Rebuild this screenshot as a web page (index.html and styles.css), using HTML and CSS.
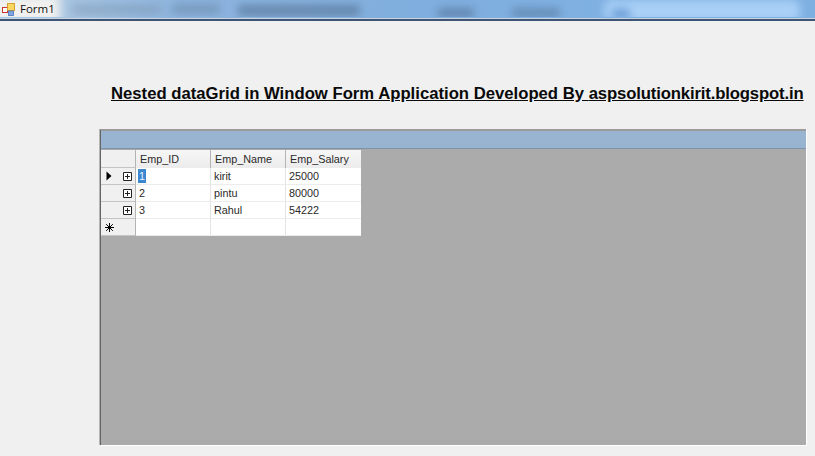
FILE: index.html
```html
<!DOCTYPE html>
<html lang="en">
<head>
<meta charset="utf-8">
<title>Form1</title>
<link rel="stylesheet" href="styles.css">
</head>
<body>
<header class="titlebar">
  <div class="glass"><i class="blob b1"></i><i class="blob b2"></i><i class="blob b3"></i><i class="blob b4"></i><i class="blob b5"></i><i class="blob b6"></i><i class="blob b7"></i><i class="blob b8"></i></div>
  <svg class="app-icon" width="16" height="16" viewBox="0 0 16 16">
    <rect x="1.5" y="7.5" width="5" height="5" fill="#fff" stroke="#c8362e"/>
    <rect x="6.5" y="3.5" width="7" height="7" fill="#f8d860" stroke="#d8a030"/>
    <rect x="7.5" y="11" width="5" height="4.5" fill="#7fa6e0" stroke="#4a70b8" stroke-width=".8"/>
  </svg>
  <span class="form-title">Form1</span>
</header>
<main class="form">
  <h1 class="heading">Nested dataGrid in Window Form Application Developed By <span class="domain">aspsolutionkirit.blogspot.in</span></h1>
  <section class="datagrid">
    <div class="caption"></div>
    <div class="grid-body">
      <table class="emp">
        <thead>
          <tr><th class="rh"></th><th>Emp_ID</th><th>Emp_Name</th><th>Emp_Salary</th></tr>
        </thead>
        <tbody>
          <tr>
            <td class="rh"><span class="rh-in"><svg class="arrow" width="6" height="10" viewBox="0 0 6 10"><path d="M0.5 0.5 L5.5 5 L0.5 9.5Z" fill="#000"/></svg><svg class="plus" width="9" height="9" viewBox="0 0 9 9"><path d="M.5.5h8v8h-8zM2 4.5h5M4.5 2v5" fill="#fff" stroke="#222"/></svg></span></td>
            <td><span class="sel">1</span></td><td>kirit</td><td>25000</td>
          </tr>
          <tr>
            <td class="rh"><span class="rh-in"><svg class="plus" width="9" height="9" viewBox="0 0 9 9"><path d="M.5.5h8v8h-8zM2 4.5h5M4.5 2v5" fill="#fff" stroke="#222"/></svg></span></td>
            <td>2</td><td>pintu</td><td>80000</td>
          </tr>
          <tr>
            <td class="rh"><span class="rh-in"><svg class="plus" width="9" height="9" viewBox="0 0 9 9"><path d="M.5.5h8v8h-8zM2 4.5h5M4.5 2v5" fill="#fff" stroke="#222"/></svg></span></td>
            <td>3</td><td>Rahul</td><td>54222</td>
          </tr>
          <tr>
            <td class="rh"><span class="rh-new"><svg width="9" height="9" viewBox="0 0 9 9"><path d="M4.5 0v9M0 4.5h9M1.2 1.2l6.6 6.6M7.8 1.2L1.2 7.8" stroke="#000" stroke-width="1"/></svg></span></td>
            <td></td><td></td><td></td>
          </tr>
        </tbody>
      </table>
    </div>
  </section>
</main>
</body>
</html>
```
FILE: styles.css
```css
* { box-sizing: border-box; }
html, body { margin: 0; padding: 0; }
body {
  width: 815px;
  height: 456px;
  overflow: hidden;
  background: #f0f0f0;
  font-family: "Liberation Sans", Arial, sans-serif;
  color: #000;
}
.titlebar {
  position: relative;
  height: 21px;
  display: flex;
  align-items: center;
  padding: 0 0 3px 1px;
  overflow: hidden;
  background: linear-gradient(90deg, #a9c6e2 60px, #8db4de 180px, #80aedd 400px, #7fb0e2 590px);
  border-bottom: 2px solid #3e5474;
  box-shadow: inset 0 -1px 0 #c8d4e2;
}
.glass { position: absolute; inset: 0 0 2px; overflow: hidden; }
.blob { position: absolute; display: block; filter: blur(4px); border-radius: 3px; }
.b1 { left: -10px; top: -6px; width: 70px; height: 30px; background: #f1f1ef; filter: blur(5px); }
.b2 { left: 72px; top: 5px; width: 90px; height: 9px; background: #7c95b0; opacity: .55; }
.b7 { left: 172px; top: 4px; width: 48px; height: 10px; background: #6b89a9; opacity: .6; }
.b3 { left: 238px; top: 5px; width: 122px; height: 11px; background: #5e7ea0; opacity: .8; }
.b4 { left: 438px; top: 8px; width: 36px; height: 10px; background: #5b7ea6; opacity: .8; }
.b5 { left: 512px; top: 8px; width: 48px; height: 10px; background: #5b7ea6; opacity: .7; }
.b6 { left: 604px; top: 0; width: 196px; height: 22px; background: #a9d0f6; filter: blur(4px); border-radius: 8px; }
.b8 { left: 612px; top: 9px; width: 18px; height: 10px; background: #5c90d0; opacity: .8; }
.app-icon { position: relative; flex: none; }
.form-title {
  position: relative;
  margin-left: 3px;
  font-family: "Open Sans", "Liberation Sans", sans-serif;
  font-size: 11.5px;
  color: #111;
}
.form { padding: 62px 9px 0 100px; }
.heading {
  margin: 0 0 25px;
  height: 21px;
  padding-left: 11px;
  font-size: 16.7px;
  line-height: 22px;
  font-weight: bold;
  text-decoration: underline;
  white-space: nowrap;
  color: #0a0a0a;
}
.domain { letter-spacing: -0.14px; }
.datagrid {
  width: 706px;
  height: 316px;
  border-top: 2px solid #9a9a9a;
  border-left: 1px solid #666;
  display: flex;
  flex-direction: column;
  box-shadow: 1px 1px 0 #fff, -1px 0 0 #b4b4b4;
}
.caption {
  height: 18px;
  flex: none;
  background: #99b4d1;
  border-bottom: 1px solid #7d93ac;
}
.grid-body { flex: 1; background: #ababab; padding-top: 1px; }
.emp {
  border-collapse: separate;
  border-spacing: 0;
  table-layout: fixed;
  width: 260px;
  font-size: 10.8px;
  color: #2a2a2a;
  background: #fff;
}
.emp th, .emp td {
  height: 17px;
  padding: 0 0 0 3px;
  text-align: left;
  font-weight: normal;
  white-space: nowrap;
  overflow: hidden;
  border-right: 1px solid #e4e4e4;
  border-bottom: 1px solid #ececec;
}
.emp th {
  height: 18px;
  padding-left: 4px;
  background: linear-gradient(#f6f6f6, #ececec);
  border-right: 1px solid #b4b4b4;
  border-bottom: none;
}
.emp th:last-child, .emp td:last-child { border-right: none; }
.emp th:nth-child(1) { width: 35px; }
.emp th:nth-child(2), .emp th:nth-child(3), .emp th:nth-child(4) { width: 75px; }
.emp .rh {
  padding: 0;
  background: #f0f0f0;
  border-right: 1px solid #b4b4b4;
  border-bottom: 1px solid #c4c4c4;
}
.rh-in { position: relative; display: flex; align-items: center; justify-content: flex-end; height: 16px; padding-right: 3px; }
.arrow { position: absolute; left: 5px; top: 3px; }
.rh-new { display: flex; align-items: center; height: 16px; padding-left: 4px; }
.sel { background: #3d86d0; color: #e8f2ff; display: inline-block; height: 14px; line-height: 14px; padding: 0 1px; margin-left: -1px; }
```
